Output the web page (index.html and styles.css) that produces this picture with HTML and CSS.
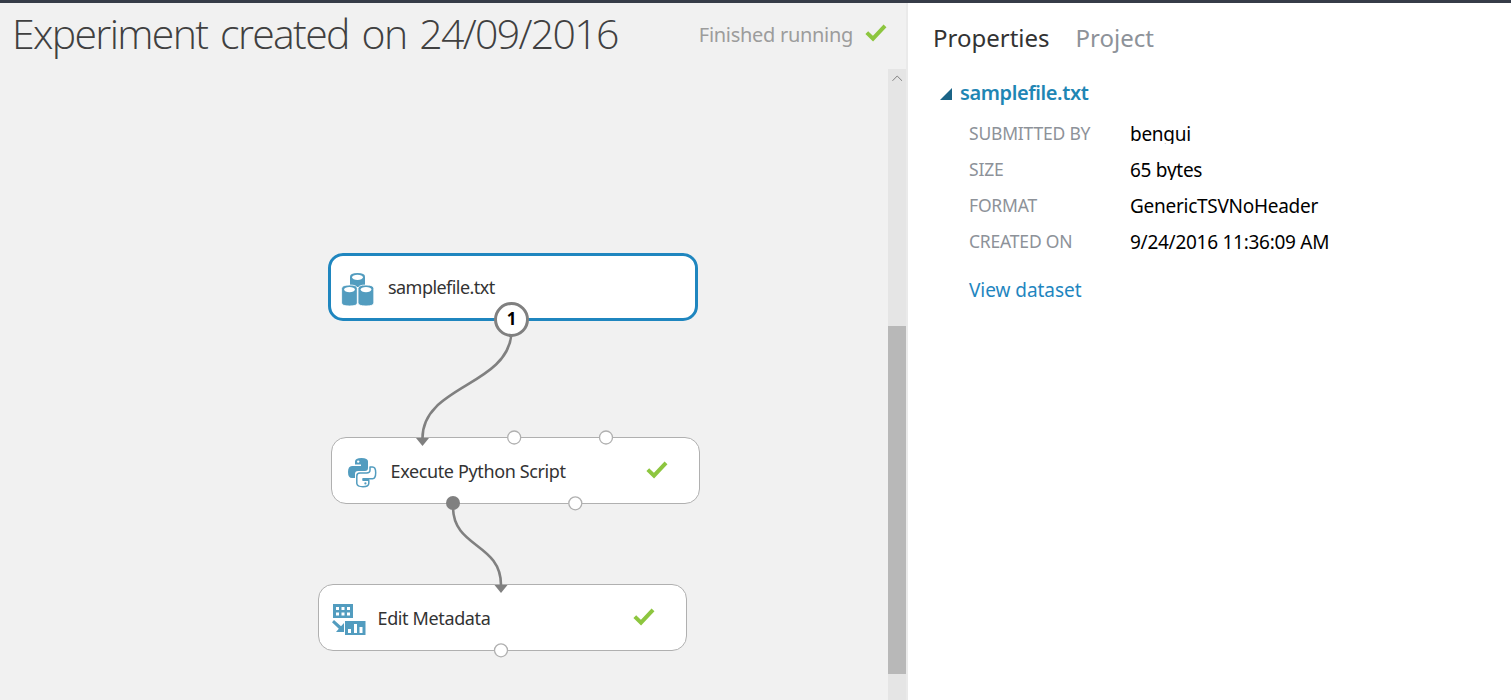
FILE: index.html
```html
<!DOCTYPE html>
<html lang="en">
<head>
<meta charset="utf-8">
<title>Experiment</title>
<link rel="stylesheet" href="styles.css">
</head>
<body>
<div class="topbar"></div>
<div class="app">
  <main class="workspace">
    <header class="header">
      <h1 class="title">Experiment created on 24/09/2016</h1>
      <div class="status"><span class="status-text">Finished running</span>
        <svg class="check" viewBox="0 0 22 18"><path d="M1.8 8.6 8 14.6 20 1.8"/></svg>
      </div>
    </header>
    <div class="canvas-row">
      <div class="canvas">
        <section class="node node-data">
          <svg class="icon" width="34" height="36" viewBox="0 0 34 36">
            <g fill="#529cbf">
              <path d="M9 5.500Q9 2 16.500 2T24 5.500V16H9Z"/>
              <path d="M.6 17.500Q.6 14 8.500 14T16.300 17.500V32Q16.300 35 8.500 35T.6 32Z" stroke="#fff" stroke-width=".8"/>
              <path d="M17 17.500Q17 14 25 14T32.800 17.500V32Q32.800 35 25 35T17 32Z" stroke="#fff" stroke-width=".8"/>
            </g>
            <g fill="#fff"><ellipse cx="16.500" cy="6.300" rx="5.400" ry="2.600"/><ellipse cx="8.500" cy="18.600" rx="5.400" ry="2.700"/><ellipse cx="25" cy="18.600" rx="5.400" ry="2.700"/></g>
          </svg>
          <span class="label label-data">samplefile.txt</span>
        </section>
        <section class="node node-python">
          <svg class="icon" width="30" height="32" viewBox="0 0 30 32">
            <path fill="#529cbf" d="M8 7V4.500Q8 1 14.500 1T21 4.500V11Q21 14 18 14H11Q8 14 8 17V21H5Q1 21 1 15T5 9H14V7.500H8Z"/>
            <circle cx="11.200" cy="4.600" r="1.200" fill="#fff"/>
            <path fill="#fff" stroke="#529cbf" stroke-width="1.500" stroke-linejoin="round" d="M23 10H25.500Q28.700 10 28.700 15.700T25.500 21.800H16V23.200H21.800V26.200Q21.800 29.700 16 29.700T9.800 26.500V19Q9.800 16 13 16H19.500Q23 16 23 13Z"/>
            <circle cx="18.400" cy="26.400" r="1.100" fill="#529cbf"/>
          </svg>
          <span class="label label-python">Execute Python Script</span>
          <svg class="check node-check" viewBox="0 0 22 18"><path d="M1.800 8.600 8 14.600 20 1.800"/></svg>
        </section>
        <section class="node node-meta">
          <svg class="icon" width="34" height="32" viewBox="0 0 34 32">
            <path fill="#529cbf" d="M1 0H21V14H1ZM13 17H33.500V31H13Z"/>
            <path fill="#fff" d="M4 3h3v3H4zM9.500 3h3v3h-3zM15 3h3v3h-3zM4 8.500h3v3H4zM9.500 8.500h3v3h-3zM15 8.500h3v3h-3zM16 25h3v4h-3zM22 20h3v9h-3zM27.500 23h3v6h-3z"/>
            <path fill="#529cbf" d="M0 18.200 2 16 9 22.300 12 19V28H4L6.800 24.800Z"/>
          </svg>
          <span class="label label-meta">Edit Metadata</span>
          <svg class="check node-check" viewBox="0 0 22 18"><path d="M1.800 8.600 8 14.600 20 1.800"/></svg>
        </section>
        <svg class="wires" width="888" height="631" viewBox="0 69 888 631">
          <g fill="none" stroke="#808080" stroke-width="2.600">
            <path d="M511.500 334C507 386 422.500 386 422.500 438"/>
            <path d="M453 507C453 548 501 543 501 585"/>
          </g>
          <g fill="#808080"><path d="M416 438H429L422.500 446ZM494.500 585H507.500L501 593Z"/><circle cx="453" cy="503" r="7"/></g>
          <g fill="#fff" stroke="#b0b0b0" stroke-width="1.300">
            <circle cx="514.200" cy="437.500" r="6.500"/><circle cx="606" cy="437.500" r="6.500"/><circle cx="575.300" cy="503.300" r="6.500"/><circle cx="501" cy="650.300" r="6.500"/>
          </g>
        </svg>
        <div class="port-number">1</div>
      </div>
      <div class="scrollbar">
        <svg class="arrow" width="18" height="18" viewBox="0 0 18 18"><path d="M4.500 11.800 9.200 7 14 11.800"/></svg>
        <div class="thumb"></div>
      </div>
    </div>
  </main>
  <aside class="panel">
    <nav class="tabs"><span class="tab-active">Properties</span><span class="tab">Project</span></nav>
    <h2 class="group"><svg class="caret" width="12" height="12" viewBox="0 0 11 11"><path d="M0 11 11 0V11Z"/></svg><span>samplefile.txt</span></h2>
    <dl class="props">
      <dt>SUBMITTED BY</dt><dd>bengui</dd>
      <dt>SIZE</dt><dd>65 bytes</dd>
      <dt>FORMAT</dt><dd>GenericTSVNoHeader</dd>
      <dt>CREATED ON</dt><dd>9/24/2016 11:36:09 AM</dd>
    </dl>
    <a class="link">View dataset</a>
  </aside>
</div>
</body>
</html>
```
FILE: styles.css
```css
* { box-sizing: border-box; }
body { margin: 0; height: 700px; overflow: hidden; background: #fff; font-family: "Noto Sans", "Open Sans", sans-serif; display: flex; flex-direction: column; white-space: nowrap; }
.topbar { height: 3px; flex: none; background: #363c48; }
.app { flex: 1; display: flex; min-height: 0; }
.workspace { width: 908px; flex: none; background: #f1f1f1; border-right: 2px solid #eaeaea; display: flex; flex-direction: column; }
.header { height: 66px; flex: none; display: flex; justify-content: space-between; padding: 0 19px 0 12px; }
.title { margin: 0; font-family: "Open Sans", sans-serif; font-size: 41px; font-weight: 300; line-height: 60px; color: #404040; letter-spacing: -1.65px; word-spacing: 3.700px; }
.status { display: flex; align-items: flex-start; gap: 12px; color: #9c9c9c; font-size: 20px; line-height: 63px; letter-spacing: -.3px; }
.check { width: 22px; height: 18px; fill: none; stroke: #8dc63f; stroke-width: 4; }
.status .check { margin-top: 21px; }
.canvas-row { display: flex; flex: 1; }
.canvas { position: relative; flex: 1; }
.node { position: absolute; width: 369px; height: 67px; border: 1.500px solid #b0b0b0; border-radius: 15px; background: #fff; display: flex; align-items: center; color: #333; font-size: 18px; }
.node-data { left: 328px; top: 183.500px; width: 370px; height: 68px; border: 3px solid #1f86bf; padding-left: 10px; }
.node-python { left: 331px; top: 368px; padding-left: 14.500px; }
.node-meta { left: 318px; top: 515px; padding-left: 12.500px; }
.icon { flex: none; margin-top: 4px; }
.label { line-height: 24px; letter-spacing: -.37px; }
.label-data { margin-left: 13px; letter-spacing: -.55px; }
.label-python { margin-left: 14px; }
.label-meta { margin-left: 12px; }
.node-check { margin: 0 31px 2px auto; }
.wires { position: absolute; left: 0; top: 0; }
.port-number { position: absolute; left: 494px; top: 233px; width: 35px; height: 35px; border: 3px solid #808080; border-radius: 50%; background: #fff; color: #000; font-size: 17px; font-weight: 700; line-height: 28px; text-align: center; }
.scrollbar { width: 18px; background: #e5e5e5; display: flex; flex-direction: column; }
.arrow { fill: none; stroke: #808080; stroke-width: 1; flex: none; }
.thumb { margin-top: 239px; height: 348px; background: #b8b8b8; }
.panel { flex: 1; padding: 18px 0 0 25px; }
.tabs { display: flex; gap: 26px; font-size: 24px; line-height: 34px; color: #8d9299; }
.tab-active { color: #333; }
.group { margin: 24px 0 0 7px; display: flex; align-items: center; gap: 8px; font-size: 20px; font-weight: 600; line-height: 28px; color: #1f86b4; letter-spacing: -.4px; }
.caret { fill: #1b6487; margin-top: 2px; }
.props { display: grid; grid-template-columns: 161px 1fr; grid-auto-rows: 36px; margin: 9px 0 0 36px; }
.props dt { font-size: 17.500px; line-height: 35px; color: #8d9299; font-weight: 400; letter-spacing: -.2px; }
.props dd { margin: 4px 0 0; height: 24px; overflow: hidden; font-size: 19px; line-height: 28px; color: #000; letter-spacing: -.27px; }
.link { display: block; margin: 16px 0 0 36px; font-size: 19px; line-height: 28px; color: #1f86bf; letter-spacing: -.05px; }
```
